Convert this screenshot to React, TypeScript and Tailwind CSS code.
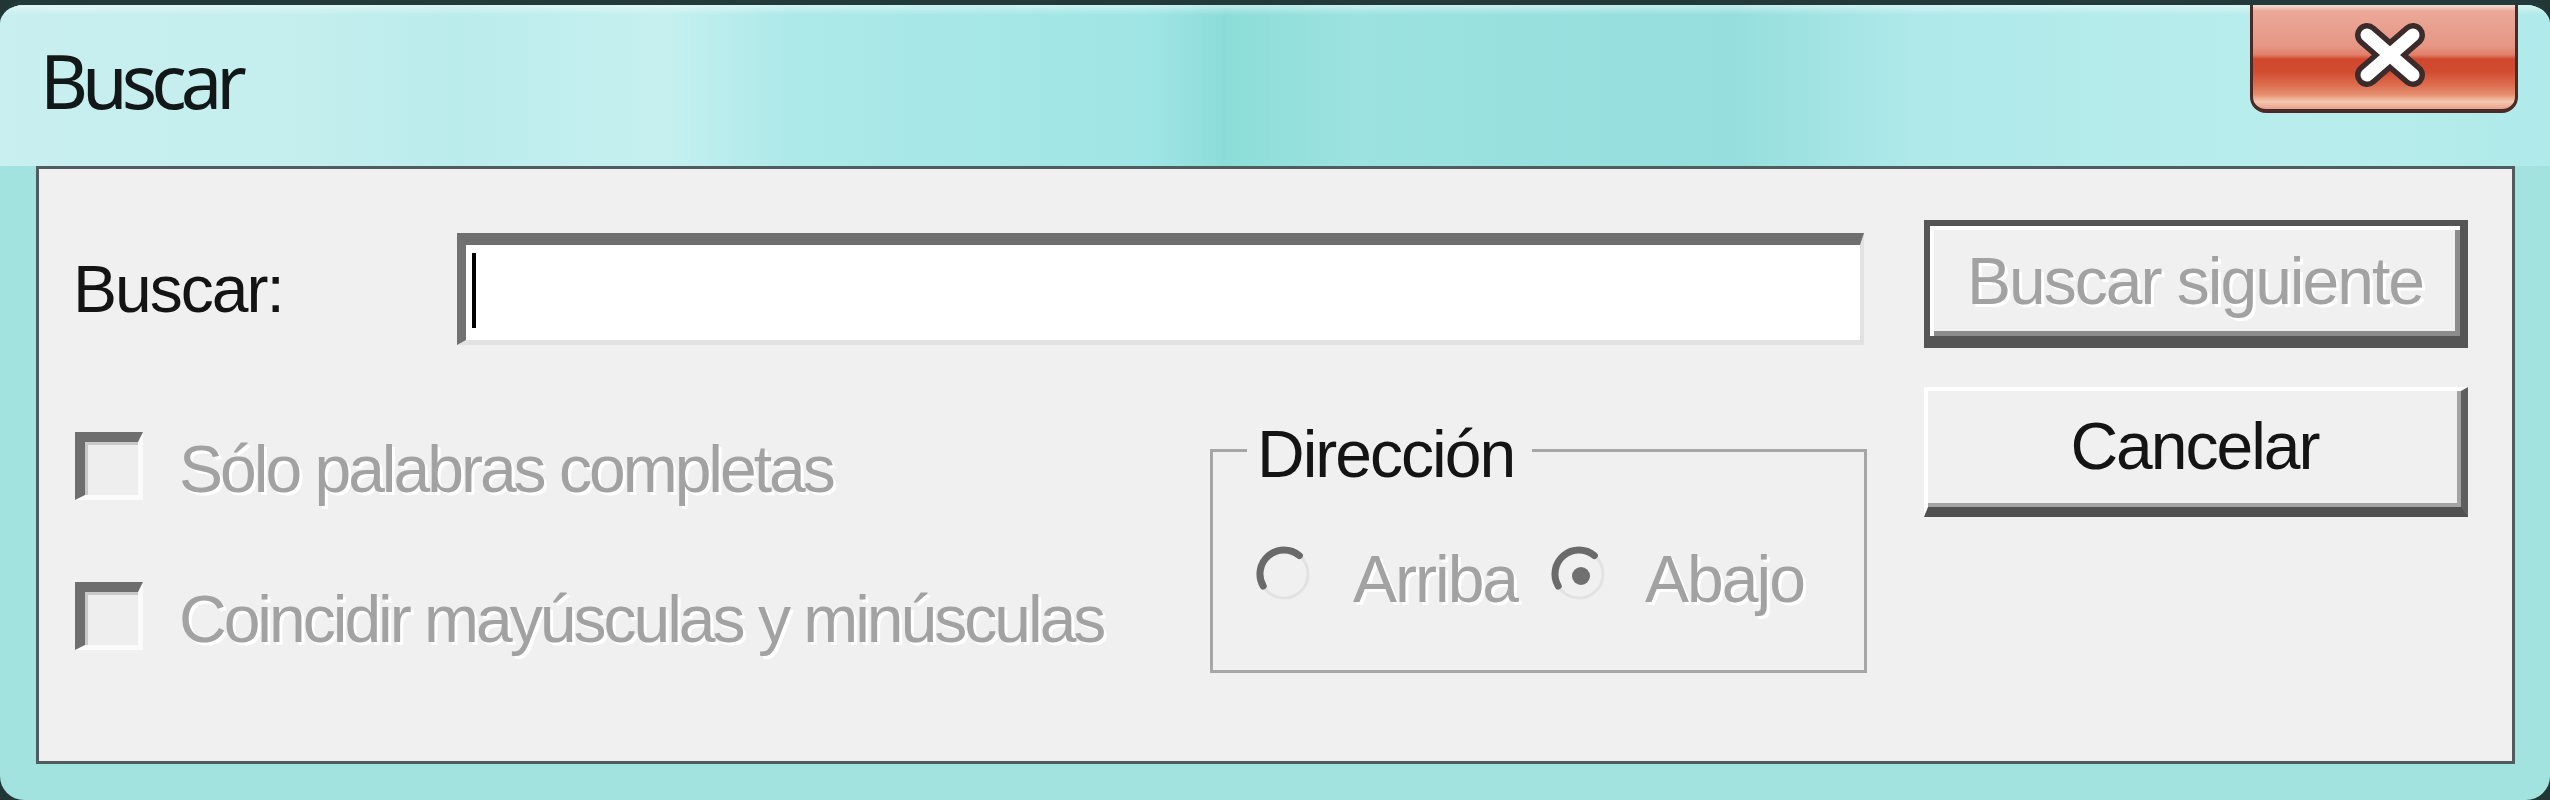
import React from 'react';

const dlg = "font-['Liberation_Sans',Arial,sans-serif] text-[66px] leading-[66px] tracking-[-2px]";
const off = 'text-[#a2a2a2] [text-shadow:3px_3px_0_#ffffff]';

function Checkbox({ label }: { label: string }) {
  return (
    <div className="flex items-start gap-[36px]">
      <div className="w-[68px] h-[68px] shrink-0 bg-[#eeeeee] border-t-[10px] border-l-[10px] border-t-[#6e6e6e] border-l-[#6e6e6e] border-r-[5px] border-b-[5px] border-r-[#fbfbfb] border-b-[#fbfbfb] shadow-[inset_3px_3px_0_#c9c9c9]" />
      <span className={`mt-[4px] whitespace-nowrap tracking-[-3px] ${off}`}>{label}</span>
    </div>
  );
}

function Radio({ checked }: { checked?: boolean }) {
  return (
    <svg width="58" height="58" viewBox="0 0 58 58" className="shrink-0">
      <circle cx="29" cy="29" r="24" fill="#f0f0f0" />
      <path d="M44.4 10.6 A24 24 0 1 1 8.2 41" fill="none" stroke="#e2e2e2" strokeWidth="3" />
      <path d="M8.2 41 A24 24 0 0 1 44.4 10.6" fill="none" stroke="#6a6a6a" strokeWidth="7" strokeLinecap="round" />
      {checked && <circle cx="31" cy="31" r="9" fill="#707070" />}
    </svg>
  );
}

function CloseButton() {
  return (
    <div className="w-[268px] h-[108px] flex items-center justify-center pl-[12px] pb-[4px] rounded-b-[16px] border-x-[3px] border-b-[4px] border-[#4a2a26] bg-[linear-gradient(to_bottom,#f6dcd2_0%,#eba899_6%,#e69684_40%,#e07e6a_48%,#d0472d_52%,#d24c31_64%,#dc6a4c_76%,#e68e70_86%,#f4c8b0_93%,#e6a08a_100%)]">
      <svg width="80" height="66" viewBox="0 0 80 66">
        <g strokeLinecap="round">
          <path d="M17 13 L63 53 M63 13 L17 53" stroke="#3b2b2b" strokeWidth="24" />
          <path d="M17 13 L63 53 M63 13 L17 53" stroke="#ffffff" strokeWidth="13" />
        </g>
      </svg>
    </div>
  );
}

export default function App() {
  return (
    <div className="w-[2550px] h-[800px] overflow-hidden bg-[#223636]">
      <div className="h-full flex flex-col rounded-[24px] border-t-[5px] border-[#223a3a] bg-[#a2e3df] overflow-hidden">
        {/* title bar */}
        <div className="h-[161px] shrink-0 flex items-start justify-between pl-[40px] pr-[32px] bg-[linear-gradient(to_bottom,rgba(255,255,255,0.45)_0px,rgba(255,255,255,0)_10px),linear-gradient(to_right,#c9eff0_0%,#c4eeee_12%,#bbecec_18%,#c6f0f0_26%,#ade9e9_31%,#a0e5e5_45%,#8cddd9_48%,#9be2e0_53%,#95dedd_68%,#afe9ea_75%,#b9eded_90%,#b0eaea_100%)]">
          <span className="mt-[39px] font-['Noto_Sans',sans-serif] text-[74px] leading-[74px] tracking-[-6px] text-[#121818]">
            Buscar
          </span>
          <CloseButton />
        </div>

        {/* client area */}
        <div className="flex-1 ml-[36px] mr-[35px] mb-[36px] flex border-[3px] border-[#4f5d5e] bg-[#f0f0f0] text-[#141414]">
          <div className={`w-[1825px] shrink-0 pl-[34px] pt-[64px] ${dlg}`}>
            <div className="h-[112px] flex items-center">
              <span className="w-[384px] shrink-0">Buscar:</span>
              <div className="flex-1 h-full bg-white border-t-[12px] border-l-[9px] border-t-[#6f6f6f] border-l-[#727272] border-r-[4px] border-b-[5px] border-r-[#e2e2e2] border-b-[#e2e2e2]">
                <div className="w-[4px] h-[75px] bg-black ml-[6px] mt-[8px]" />
              </div>
            </div>

            <div className="flex items-start">
              <div className="w-[1137px] shrink-0 pl-[2px] pt-[87px] flex flex-col gap-[80px]">
                <Checkbox label="Sólo palabras completas" />
                <Checkbox label="Coincidir mayúsculas y minúsculas" />
              </div>

              <fieldset className="w-[657px] shrink-0 mt-[72px] px-[34px] pt-[62px] pb-[58px] border-[3px] border-[#a6a6a6]">
                <legend className="pl-[10px] pr-[18px] pt-[8px] leading-[58px] text-[#141414]">Dirección</legend>
                <div className="flex items-start pl-[8px]">
                  <Radio />
                  <span className={`ml-[40px] mt-[1px] ${off}`}>Arriba</span>
                  <div className="ml-[33px]">
                    <Radio checked />
                  </div>
                  <span className={`ml-[37px] mt-[1px] ${off}`}>Abajo</span>
                </div>
              </fieldset>
            </div>
          </div>

          <div className={`w-[544px] shrink-0 ml-[60px] pt-[51px] flex flex-col ${dlg}`}>
            <div className="h-[128px] flex items-center justify-center bg-[#f0f0f0] border-[6px] border-r-[8px] border-b-[12px] border-[#555555] shadow-[inset_4px_4px_0_#ffffff,inset_-5px_-5px_0_#8c8c8c]">
              <span className={off}>Buscar siguiente</span>
            </div>
            <div className="mt-[39px] h-[130px] flex items-center justify-center pb-[6px] bg-[#f0f0f0] border-t-[4px] border-l-[4px] border-t-[#ffffff] border-l-[#ffffff] border-r-[7px] border-b-[10px] border-r-[#5e5e5e] border-b-[#505050] shadow-[inset_-4px_-4px_0_#a3a3a3]">
              <span>Cancelar</span>
            </div>
          </div>
        </div>
      </div>
    </div>
  );
}
